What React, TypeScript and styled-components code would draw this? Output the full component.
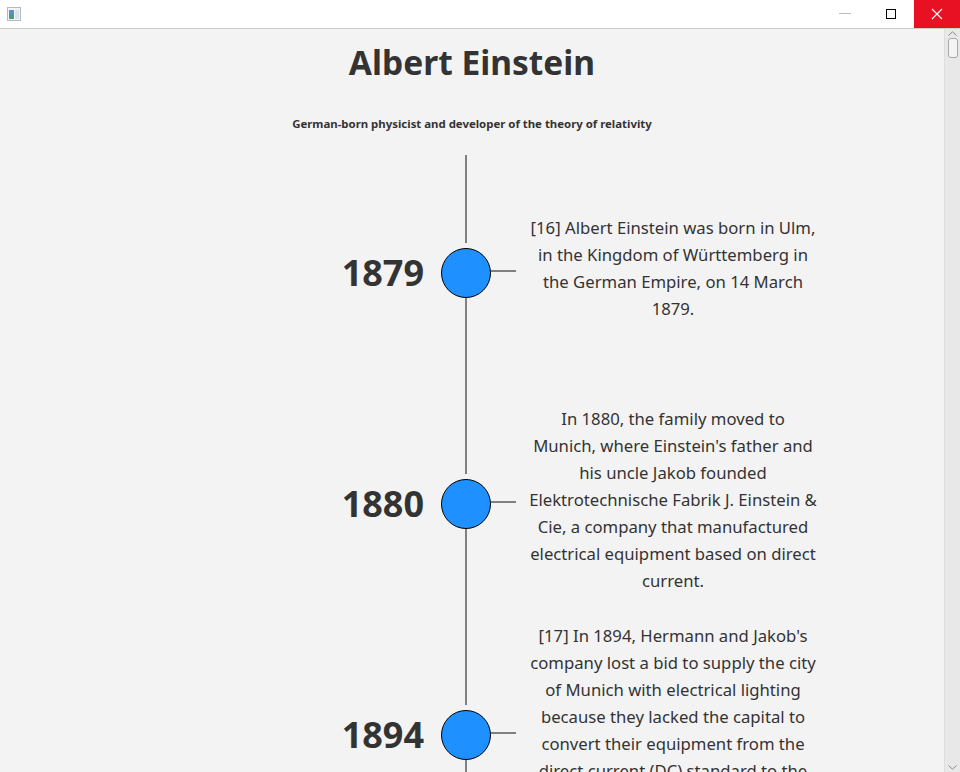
import React from "react";
import styled, { createGlobalStyle } from "styled-components";

const Global = createGlobalStyle`
  html, body { margin: 0; padding: 0; }
  body {
    width: 960px;
    height: 772px;
    overflow: hidden;
    background: #ffffff;
    font-family: "Noto Sans", "Open Sans", "DejaVu Sans", sans-serif;
    color: #333333;
  }
`;

const Window = styled.div`
  width: 960px;
  height: 772px;
  display: flex;
  flex-direction: column;
  overflow: hidden;
`;

const TitleBar = styled.div`
  height: 28px;
  flex: none;
  display: flex;
  align-items: stretch;
  background: #ffffff;
  border-bottom: 1px solid #cccccc;
`;

const AppIcon = styled.div`
  width: 28px;
  display: flex;
  align-items: center;
  justify-content: center;
`;

const Spacer = styled.div`
  flex: 1;
`;

const CaptionButton = styled.div<{ $close?: boolean }>`
  width: 46px;
  display: flex;
  align-items: center;
  justify-content: center;
  background: ${(p) => (p.$close ? "#e81123" : "transparent")};
`;

const Body = styled.div`
  flex: 1;
  display: flex;
  min-height: 0;
`;

const Content = styled.main`
  flex: 1;
  background: #f3f3f3;
  overflow: hidden;
  display: flex;
  flex-direction: column;
  align-items: stretch;
  & > * {
    flex-shrink: 0;
  }
`;

const Title = styled.h1`
  margin: 0;
  padding-top: 9px;
  height: 56px;
  line-height: 48px;
  text-align: center;
  font-size: 33.5px;
  font-weight: 700;
  color: #333333;
`;

const Subtitle = styled.p`
  margin: 0;
  padding-top: 20px;
  height: 41px;
  line-height: 20px;
  text-align: center;
  font-size: 11.4px;
  font-weight: 700;
  color: #333333;
`;

const Timeline = styled.div`
  display: flex;
  flex-direction: column;
`;

const Item = styled.div`
  height: 231px;
  flex-shrink: 0;
  display: grid;
  grid-template-columns: 441px 50px 25px 314px;
`;

const Year = styled.div`
  align-self: center;
  padding-top: 5px;
  padding-right: 17px;
  text-align: right;
  font-size: 36px;
  font-weight: 700;
  line-height: 40px;
  color: #333333;
`;

const Axis = styled.div`
  display: flex;
  flex-direction: column;
  align-items: center;
`;

const Segment = styled.div`
  flex: 1;
  width: 2px;
  background: #808080;
`;

const Dot = styled.div`
  flex: none;
  width: 50px;
  height: 50px;
  margin-top: 5px;
  box-sizing: border-box;
  border-radius: 50%;
  border: 1px solid #000000;
  background: #1e90ff;
`;

const Connector = styled.div`
  align-self: center;
  height: 2px;
  background: #808080;
`;

const Text = styled.div`
  align-self: center;
  padding-bottom: 5px;
  text-align: center;
  font-size: 16.7px;
  line-height: 27px;
  color: #333333;
`;

const Line = styled.span`
  display: block;
  white-space: nowrap;
`;

const Scrollbar = styled.div`
  width: 16px;
  flex: none;
  background: #e8e8e8;
  border-left: 1px solid #dddddd;
  box-sizing: border-box;
  display: flex;
  flex-direction: column;
  align-items: center;
`;

const Arrow = styled.div`
  height: 9px;
  display: flex;
  align-items: center;
  justify-content: center;
`;

const Thumb = styled.div`
  width: 10px;
  height: 20px;
  box-sizing: border-box;
  border: 1px solid #a8a8a8;
  border-radius: 3px;
  background: #f4f4f4;
`;

const Track = styled.div`
  flex: 1;
`;

const events = [
  {
    year: "1879",
    lines: [
      "[16] Albert Einstein was born in Ulm,",
      "in the Kingdom of Württemberg in",
      "the German Empire, on 14 March",
      "1879.",
    ],
  },
  {
    year: "1880",
    lines: [
      "In 1880, the family moved to",
      "Munich, where Einstein's father and",
      "his uncle Jakob founded",
      "Elektrotechnische Fabrik J. Einstein &",
      "Cie, a company that manufactured",
      "electrical equipment based on direct",
      "current.",
    ],
  },
  {
    year: "1894",
    lines: [
      "[17] In 1894, Hermann and Jakob's",
      "company lost a bid to supply the city",
      "of Munich with electrical lighting",
      "because they lacked the capital to",
      "convert their equipment from the",
      "direct current (DC) standard to the",
      "more efficient alternating current",
      "(AC) standard.",
    ],
  },
];

export default function App() {
  return (
    <>
      <Global />
      <Window>
        <TitleBar>
          <AppIcon>
            <svg width="16" height="16" viewBox="0 0 16 16">
              <rect x="1.5" y="1.5" width="13" height="13" fill="#f4f4f4" stroke="#b8b8b8" />
              <rect x="3" y="4" width="5" height="9" fill="#4a9a8a" />
              <rect x="3" y="4" width="5" height="4" fill="#5a8fc8" />
              <rect x="9" y="4" width="4" height="9" fill="#d8e4ec" />
            </svg>
          </AppIcon>
          <Spacer />
          <CaptionButton>
            <svg width="12" height="2" viewBox="0 0 12 2">
              <rect x="0" y="0" width="12" height="1" fill="#bdbdbd" />
            </svg>
          </CaptionButton>
          <CaptionButton>
            <svg width="12" height="12" viewBox="0 0 12 12">
              <rect x="1.5" y="1.5" width="9" height="9" fill="none" stroke="#000" />
            </svg>
          </CaptionButton>
          <CaptionButton $close>
            <svg width="12" height="12" viewBox="0 0 12 12">
              <path d="M1 1 L11 11 M11 1 L1 11" stroke="#fff" strokeWidth="1.1" />
            </svg>
          </CaptionButton>
        </TitleBar>
        <Body>
          <Content>
            <Title>Albert Einstein</Title>
            <Subtitle>German-born physicist and developer of the theory of relativity</Subtitle>
            <Timeline>
              {events.map((e) => (
                <Item key={e.year}>
                  <Year>{e.year}</Year>
                  <Axis>
                    <Segment />
                    <Dot />
                    <Segment />
                  </Axis>
                  <Connector />
                  <Text>
                    {e.lines.map((l, i) => (
                      <Line key={i}>{l}</Line>
                    ))}
                  </Text>
                </Item>
              ))}
            </Timeline>
          </Content>
          <Scrollbar>
            <Arrow>
              <svg width="9" height="5" viewBox="0 0 9 5">
                <path d="M0.5 4.5 L4.5 0.8 L8.5 4.5" fill="none" stroke="#8a8a8a" />
              </svg>
            </Arrow>
            <Thumb />
            <Track />
            <Arrow>
              <svg width="9" height="5" viewBox="0 0 9 5">
                <path d="M0.5 0.5 L4.5 4.2 L8.5 0.5" fill="none" stroke="#8a8a8a" />
              </svg>
            </Arrow>
          </Scrollbar>
        </Body>
      </Window>
    </>
  );
}
